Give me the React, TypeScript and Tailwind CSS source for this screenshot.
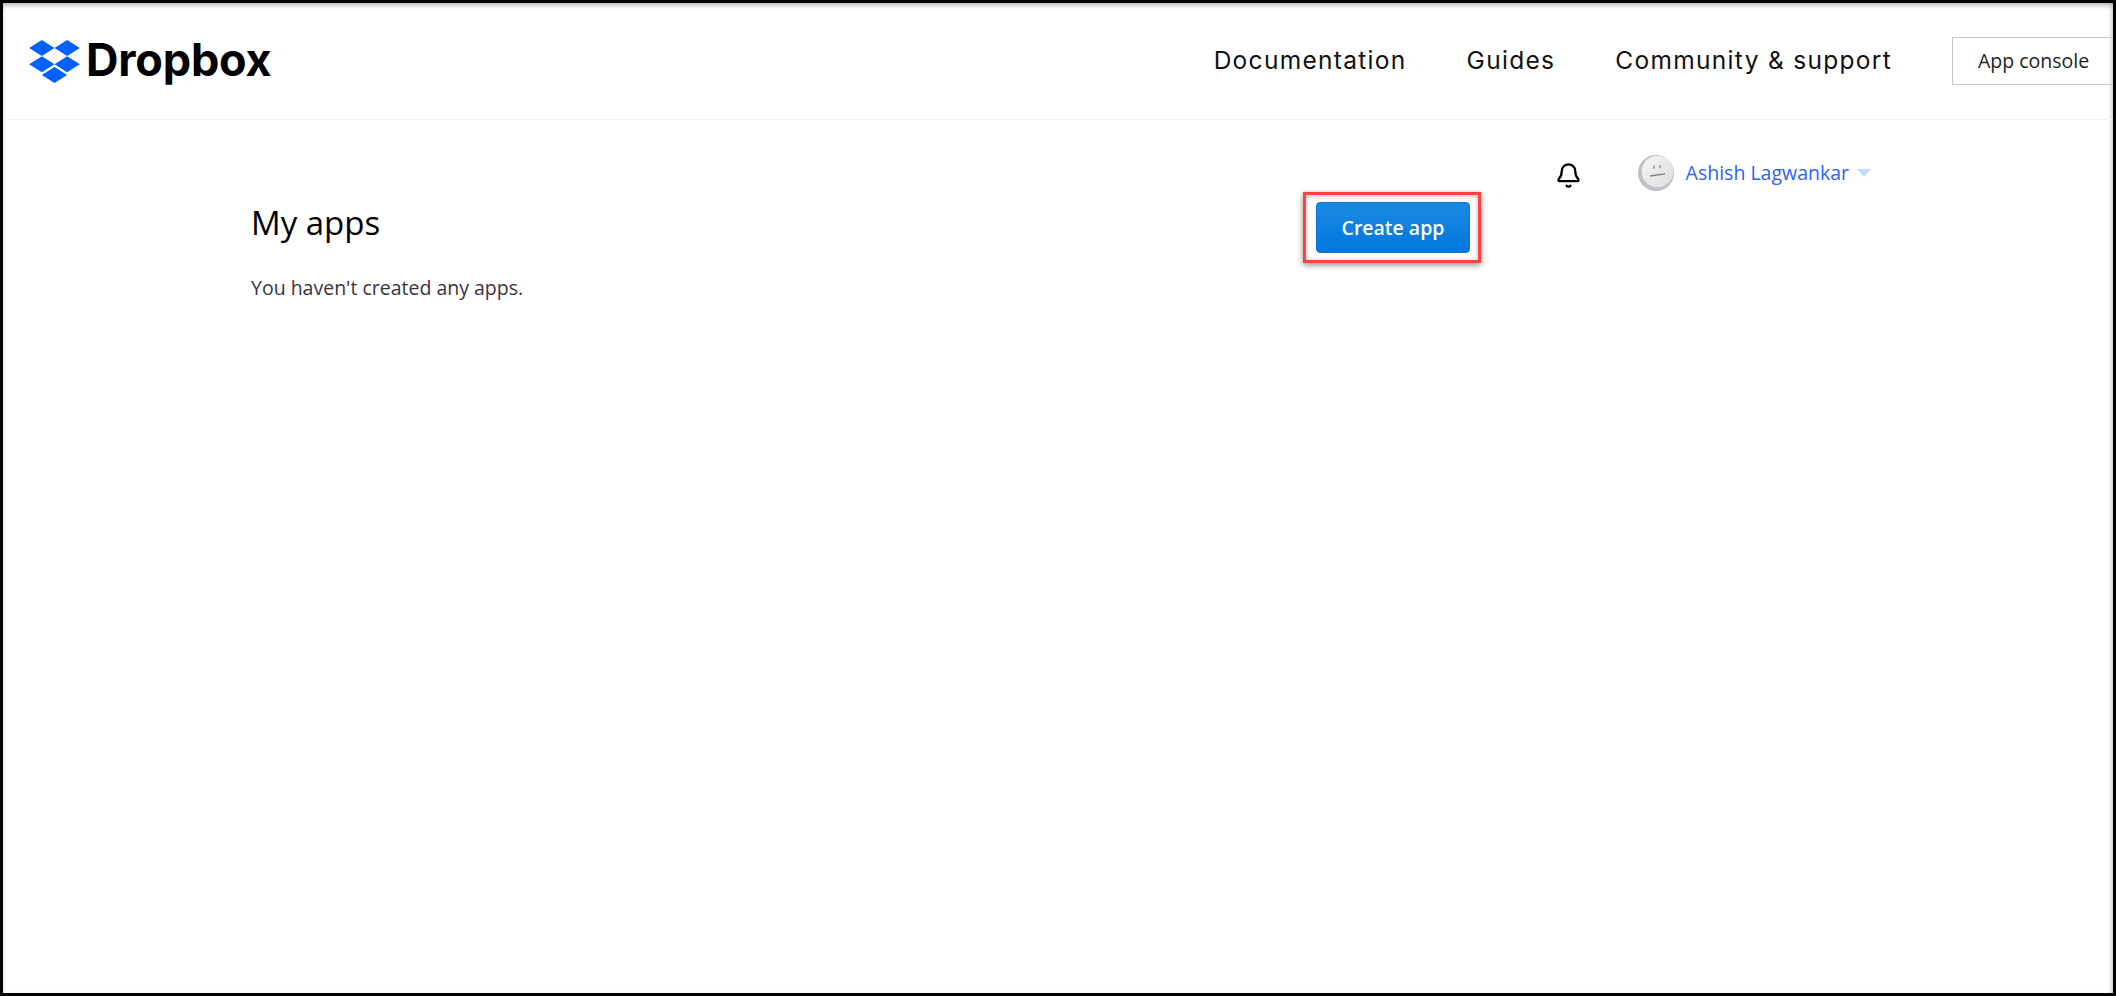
import { Bell } from "lucide-react"

function DropboxGlyph() {
  return (
    <svg viewBox="0 1.807 24 20.386" className="h-[43px] w-[51px] shrink-0" fill="#0061fe" aria-hidden="true">
      <path d="M6 1.807L0 5.629l6 3.822 6.001-3.822L6 1.807zM18 1.807l-6 3.822 6 3.822 6-3.822-6-3.822zM0 13.274l6 3.822 6.001-3.822L6 9.452l-6 3.822zM18 9.452l-6 3.822 6 3.822 6-3.822-6-3.822zM6 18.371l6.001 3.822 6-3.822-6-3.822L6 18.371z" />
    </svg>
  )
}

function Avatar() {
  return (
    <svg viewBox="0 0 36 36" className="h-9 w-9 shrink-0" aria-hidden="true">
      <defs>
        <linearGradient id="pill" x1="0" y1="0" x2="1" y2="1">
          <stop offset="0" stopColor="#f6f6f6" />
          <stop offset="1" stopColor="#dcdde0" />
        </linearGradient>
      </defs>
      <circle cx="18" cy="18" r="18" fill="#bfc1c6" />
      <circle cx="19.5" cy="16.5" r="15.8" fill="url(#pill)" />
      <path d="M12 21l15-2.2" stroke="#7f8185" strokeWidth="1.3" fill="none" />
      <path d="M16 10.5v3.2M22 10v3.2" stroke="#7f8185" strokeWidth="1.2" fill="none" />
    </svg>
  )
}

export default function App() {
  return (
    <div className="relative flex h-[996px] w-[2116px] flex-col overflow-hidden border-[3px] border-black bg-white font-['Open_Sans',sans-serif] shadow-[inset_0_4px_4px_-1px_rgba(0,0,0,0.25),inset_-4px_0_4px_-2px_rgba(0,0,0,0.15)]">
      <header className="flex h-[117px] shrink-0 items-center justify-between border-b border-[#f2f2f2] pl-[26px]">
        <div className="flex items-center gap-[6px]">
          <DropboxGlyph />
          <span className="pb-[4px] font-['Inter',sans-serif] text-[45px] font-bold leading-none tracking-[-0.2px] text-black">
            Dropbox
          </span>
        </div>
        <div className="flex items-center">
          <nav className="flex items-center gap-[60px] pb-[2px] font-['Inter',sans-serif] text-[24.5px] tracking-[1.3px] text-[#111]">
            <a>Documentation</a>
            <a>Guides</a>
            <a>Community &amp; support</a>
          </nav>
          <div className="ml-[60px] flex h-[48px] w-[161px] items-center border border-r-0 border-[#c8c8c8] pl-[25px] text-[19.5px] text-[#222]">
            App console
          </div>
        </div>
      </header>

      <main className="pl-[248px] pr-[242px]">
        <div className="mt-[35px] flex h-[36px] items-center justify-end">
          <Bell className="h-[27px] w-[27px] translate-y-[2px] text-black" strokeWidth={2} />
          <div className="ml-[56px] flex items-center gap-[12px]">
            <Avatar />
            <span className="text-[19.5px] text-[#2f62f5]">Ashish Lagwankar</span>
            <span className="ml-[-4px] h-0 w-0 border-x-[7px] border-t-[8px] border-x-transparent border-t-[#bfdcfb]" />
          </div>
        </div>
        <div className="mt-[11px] flex w-[1219px] items-start justify-between">
          <h1 className="text-[33px] leading-[41px] text-black">My apps</h1>
          <div className="relative">
            <button className="h-[51px] w-[154px] rounded-[4px] border border-[#0b74d6] bg-gradient-to-b from-[#1a8ae2] to-[#0077dd] text-[19.5px] font-semibold text-white">
              Create app
            </button>
            <div className="absolute -top-[10px] -right-[11px] -bottom-[10px] -left-[13px] border-[3px] border-[#ff4444] shadow-[0_2px_6px_rgba(0,0,0,0.45),inset_0_1px_4px_rgba(0,0,0,0.3)]" />
          </div>
        </div>
        <p className="mt-[20px] text-[19.5px] leading-[30px] text-[#3a3340]">You haven't created any apps.</p>
      </main>
    </div>
  )
}
